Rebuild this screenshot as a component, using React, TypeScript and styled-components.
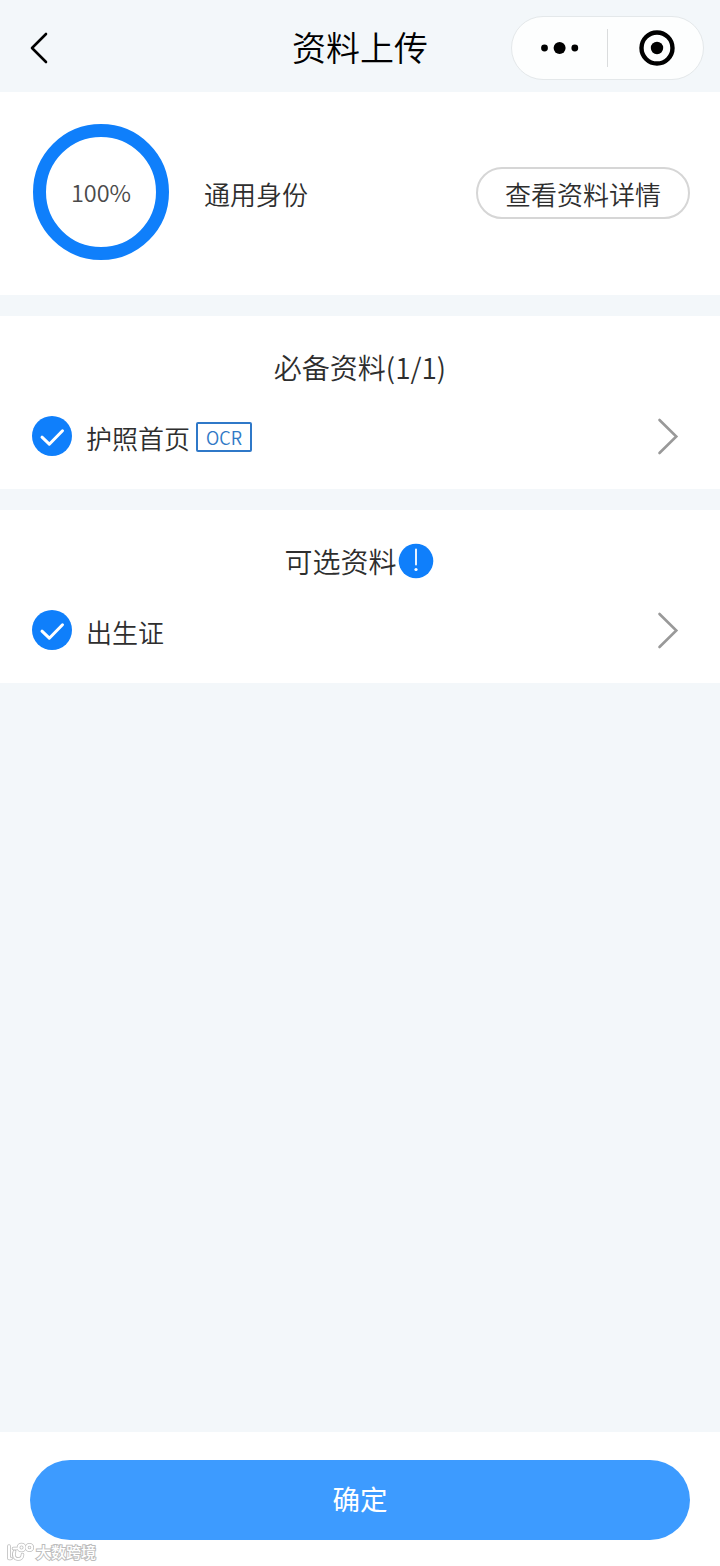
import React from 'react';
import styled, { createGlobalStyle } from 'styled-components';

const Global = createGlobalStyle`
  * { box-sizing: border-box; }
  body {
    margin: 0;
    background: #f3f7fa;
    color: #2e2e2e;
    font-family: "Noto Sans CJK SC", "Noto Sans", sans-serif;
    font-weight: 350;
  }
  button { font: inherit; color: inherit; border: 0; padding: 0; background: none; }
`;

const Page = styled.div`
  display: flex;
  flex-direction: column;
  width: 720px;
  height: 1566px;
  overflow: hidden;
  background: #f3f7fa;
`;

const Header = styled.header`
  display: grid;
  grid-template-columns: 1fr 136px 1fr;
  align-items: center;
  height: 92px;
  padding-top: 4px;
`;

const BackButton = styled.button`
  display: flex;
  justify-self: start;
  margin-left: 28px;
`;

const Title = styled.h1`
  margin: 0 0 2px;
  white-space: nowrap;
  font-size: 34px;
  line-height: 50px;
  font-weight: 350;
  color: #000;
`;

const Capsule = styled.div`
  display: flex;
  align-items: center;
  justify-self: end;
  width: 193px;
  height: 64px;
  margin-right: 16px;
  border: 1px solid #e4e8ea;
  border-radius: 32px;
  background: #fdfefe;
`;

const CapsuleHalf = styled.button`
  flex: 1;
  display: flex;
  justify-content: center;
`;

const CapsuleDivider = styled.span`
  width: 1px;
  height: 38px;
  background: #dadcdd;
`;

const Profile = styled.section`
  display: flex;
  align-items: flex-start;
  height: 203px;
  padding: 32px 30px 0 33px;
  background: #fff;
`;

const Ring = styled.div`
  display: flex;
  align-items: center;
  justify-content: center;
  width: 136px;
  height: 136px;
  border: 13px solid #0f7ffb;
  border-radius: 50%;
  font-size: 23.5px;
  color: #4a4a4a;
`;

const Identity = styled.span`
  flex: 1;
  margin: 51px 0 0 35px;
  font-size: 26px;
  line-height: 38px;
`;

const DetailButton = styled.button`
  width: 214px;
  height: 52px;
  margin-top: 43px;
  padding-top: 2px;
  border: 2px solid #d6d6d6;
  border-radius: 26px;
  font-size: 26px;
  line-height: 46px;
`;

const Section = styled.section<{ $height: number }>`
  height: ${p => p.$height}px;
  margin-top: 21px;
  padding: 30px 40px 0 32px;
  background: #fff;
`;

const SectionTitle = styled.h2`
  display: flex;
  align-items: center;
  justify-content: center;
  height: 42px;
  margin: 0 -40px 0 -32px;
  font-size: 28px;
  line-height: 42px;
  font-weight: 350;
`;

const InfoIcon = styled.svg`
  margin: 0 2px 0 1px;
`;

const Row = styled.div`
  display: flex;
  align-items: center;
  height: 40px;
  margin-top: 28px;
`;

const RowLabel = styled.span`
  margin: 3px 0 0 14px;
  font-size: 26px;
  line-height: 38px;
`;

const Tag = styled.span`
  width: 56px;
  height: 30px;
  margin: 2px 0 0 6px;
  border: 2px solid #2f78c8;
  border-radius: 2px;
  font-size: 18px;
  line-height: 26px;
  text-align: center;
  color: #3079c6;
`;

const Arrow = styled.svg`
  margin-left: auto;
`;

const Footer = styled.footer`
  position: relative;
  height: 134px;
  margin-top: auto;
  padding: 28px 30px 0;
  background: #fff;
`;

const Confirm = styled.button`
  display: block;
  width: 100%;
  height: 80px;
  padding-bottom: 3px;
  border-radius: 40px;
  background: #3d9bff;
  color: #fff;
  font-size: 27.5px;
  font-weight: 400;
  line-height: 77px;
`;

const Watermark = styled.div`
  position: absolute;
  left: 6px;
  bottom: 3px;
  display: flex;
  align-items: center;
  gap: 2px;
  font-size: 15px;
  line-height: 22px;
  font-weight: 500;
  color: #fff;
  -webkit-text-stroke: 2px #bdbdbd;
  paint-order: stroke fill;
`;

const Check = () => (
  <svg width="40" height="40" viewBox="0 0 40 40" fill="none">
    <circle cx="20" cy="20" r="20" fill="#0f7ffb" />
    <path d="M10 21.2L17.3 28.2L30.5 14.8" stroke="#fff" strokeWidth="3" strokeLinecap="round" strokeLinejoin="round" />
  </svg>
);

const Chevron = () => (
  <Arrow width="24" height="40" viewBox="0 0 24 40" fill="none">
    <path d="M3.5 4L20.3 20.5L3.5 37" stroke="#999" strokeWidth="2.6" strokeLinecap="round" strokeLinejoin="miter" />
  </Arrow>
);

export default function App() {
  return (
    <Page>
      <Global />
      <Header>
        <BackButton aria-label="返回">
          <svg width="24" height="34" viewBox="0 0 24 34" fill="none">
            <path d="M18 3L4 17L18 31" stroke="#000" strokeWidth="2.6" strokeLinecap="round" strokeLinejoin="round" />
          </svg>
        </BackButton>
        <Title>资料上传</Title>
        <Capsule>
          <CapsuleHalf aria-label="更多">
            <svg width="40" height="14" viewBox="0 0 40 14">
              <circle cx="4.5" cy="7" r="3.4" />
              <circle cx="19.6" cy="7" r="6" />
              <circle cx="34.8" cy="7" r="3.4" />
            </svg>
          </CapsuleHalf>
          <CapsuleDivider />
          <CapsuleHalf aria-label="关闭">
            <svg width="38" height="38" viewBox="0 0 38 38">
              <circle cx="20" cy="19" r="15.5" fill="none" stroke="#000" strokeWidth="4.4" />
              <circle cx="20" cy="19" r="6.2" />
            </svg>
          </CapsuleHalf>
        </Capsule>
      </Header>

      <Profile>
        <Ring>100%</Ring>
        <Identity>通用身份</Identity>
        <DetailButton>查看资料详情</DetailButton>
      </Profile>

      <Section $height={173}>
        <SectionTitle>必备资料(1/1)</SectionTitle>
        <Row>
          <Check />
          <RowLabel>护照首页</RowLabel>
          <Tag>OCR</Tag>
          <Chevron />
        </Row>
      </Section>

      <Section $height={173}>
        <SectionTitle>
          可选资料
          <InfoIcon width="36" height="36" viewBox="0 0 36 36">
            <circle cx="18" cy="18" r="17.3" fill="#0f7ffb" />
            <path d="M18 6.5V21.5" stroke="#fff" strokeWidth="1.8" strokeLinecap="round" />
            <circle cx="18" cy="26.5" r="1.6" fill="#fff" />
          </InfoIcon>
        </SectionTitle>
        <Row>
          <Check />
          <RowLabel>出生证</RowLabel>
          <Chevron />
        </Row>
      </Section>

      <Footer>
        <Confirm>确定</Confirm>
        <Watermark>
          <svg width="28" height="22" viewBox="0 0 28 22" fill="none" strokeLinecap="round" strokeLinejoin="round">
            <g stroke="#bdbdbd" strokeWidth="3.6">
              <path d="M3 5V17.5H5M8.5 10.5C6.5 15 9 18 12 18C15 18 16.5 16 16.5 13.5M7.5 7.5H11" />
              <circle cx="15.5" cy="6.5" r="3" />
              <circle cx="23.5" cy="6.5" r="2.8" />
            </g>
            <g stroke="#fff" strokeWidth="2">
              <path d="M3 5V17.5H5M8.5 10.5C6.5 15 9 18 12 18C15 18 16.5 16 16.5 13.5M7.5 7.5H11" />
              <circle cx="15.5" cy="6.5" r="3" />
              <circle cx="23.5" cy="6.5" r="2.8" />
            </g>
          </svg>
          大数跨境
        </Watermark>
      </Footer>
    </Page>
  );
}
